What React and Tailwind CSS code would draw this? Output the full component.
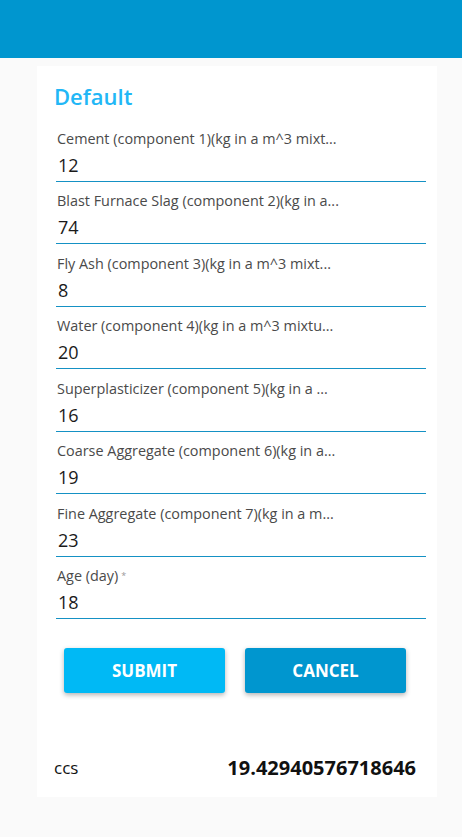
import React from "react";

const fields = [
  ["Cement (component 1)(kg in a m^3 mixt...", "12"],
  ["Blast Furnace Slag (component 2)(kg in a...", "74"],
  ["Fly Ash (component 3)(kg in a m^3 mixt...", "8"],
  ["Water (component 4)(kg in a m^3 mixtu...", "20"],
  ["Superplasticizer (component 5)(kg in a ...", "16"],
  ["Coarse Aggregate (component 6)(kg in a...", "19"],
  ["Fine Aggregate (component 7)(kg in a m...", "23"],
];

function Field({ label, value, req }) {
  return (
    <div className="h-[62.5px] flex flex-col justify-end border-b border-[#1591c4] pb-[3px]">
      <div className="text-[14.4px] leading-[18px] text-[#4a4a4a] pl-[1px] whitespace-nowrap">
        {label}
        {req && <span className="text-[9px] align-top text-[#999] ml-[3px]">*</span>}
      </div>
      <div className="text-[18px] leading-[26px] text-[#1a1a1a] pl-[2px] mt-[4px]">{value}</div>
    </div>
  );
}

export default function App() {
  return (
    <div
      className="w-[462px] h-[837px] bg-[#fafafa] overflow-hidden"
      style={{ fontFamily: '"Open Sans", "Noto Sans", sans-serif' }}
    >
      <div className="h-[58px] bg-[#0096cf]" />
      <div className="ml-[37px] mt-[8px] w-[400px] h-[731px] bg-white pt-[14px]">
        <div className="pl-[17px] text-[22px] leading-[32px] font-semibold text-[#22b7f6]">Default</div>
        <div className="ml-[19px] w-[370px] mt-[7px]">
          {fields.map(([l, v]) => (
            <Field key={l} label={l} value={v} />
          ))}
          <Field label="Age (day)" value="18" req />
        </div>
        <div className="flex gap-[20px] ml-[27px] mt-[29px]">
          <button className="w-[161px] h-[45px] rounded-[3px] bg-[#00b9f5] text-white text-[17px] font-bold shadow-[0_2px_5px_rgba(0,0,0,0.3)]">
            SUBMIT
          </button>
          <button className="w-[161px] h-[45px] rounded-[3px] bg-[#0096cf] text-white text-[17px] font-bold shadow-[0_2px_5px_rgba(0,0,0,0.3)]">
            CANCEL
          </button>
        </div>
        <div className="flex justify-between items-center ml-[17px] mr-[21px] mt-[60px]">
          <span className="text-[17px] text-[#111]">ccs</span>
          <span className="text-[20px] font-bold text-[#111]">19.42940576718646</span>
        </div>
      </div>
    </div>
  );
}
